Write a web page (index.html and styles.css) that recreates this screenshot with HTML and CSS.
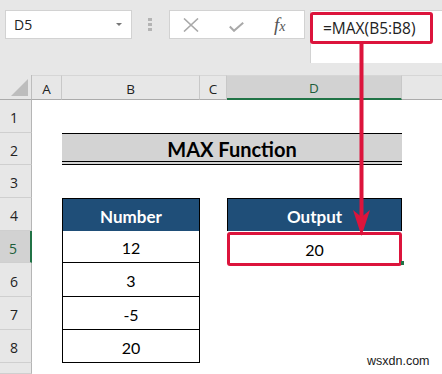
FILE: index.html
```html
<!DOCTYPE html>
<html lang="en">
<head>
  <meta charset="UTF-8">
  <meta name="viewport" content="width=device-width, initial-scale=1.0">
  <title>MAX Function</title>
  <link rel="stylesheet" href="styles.css">
</head>
<body>
  <div class="app">
    <div class="toolbar">
      <div class="namebox">
        <span>D5</span>
        <span class="caret"></span>
      </div>
      <div class="grip"><i></i><i></i><i></i></div>
      <div class="fbuttons">
        <svg class="ico-x" width="16" height="14" viewBox="0 0 16 14">
          <path d="M1 0.5 L15 13.5 M15 0.5 L1 13.5" stroke="#a9a9a9" stroke-width="1.6" fill="none"/>
        </svg>
        <svg class="ico-check" width="15" height="10" viewBox="0 0 15 10">
          <path d="M0.8 4.5 L5 8.8 L14.2 0.8" stroke="#a9a9a9" stroke-width="2" fill="none"/>
        </svg>
        <span class="fx">f<small>x</small></span>
      </div>
      <div class="formula">
        <div class="formula-text">=MAX(B5:B8)</div>
      </div>
    </div>

    <div class="sheet">
      <!-- column headers -->
      <div class="corner"><span class="corner-tri"></span></div>
      <div class="colhead">A</div>
      <div class="colhead">B</div>
      <div class="colhead">C</div>
      <div class="colhead active">D</div>
      <div class="colhead rest"></div>

      <!-- row 1 -->
      <div class="rowhead">1</div>
      <div></div><div></div><div></div><div></div><div></div>

      <!-- row 2 -->
      <div class="rowhead">2</div>
      <div></div>
      <div class="title">MAX Function</div>
      <div></div>

      <!-- row 3 -->
      <div class="rowhead">3</div>
      <div></div><div></div><div></div><div></div><div></div>

      <!-- row 4 -->
      <div class="rowhead">4</div>
      <div></div>
      <div class="th">Number</div>
      <div></div>
      <div class="th">Output</div>
      <div></div>

      <!-- row 5 -->
      <div class="rowhead active">5</div>
      <div></div>
      <div class="td">12</div>
      <div></div>
      <div class="out-cell"><div class="out-box">20</div><span class="fill-handle"></span></div>
      <div></div>

      <!-- row 6 -->
      <div class="rowhead">6</div>
      <div></div>
      <div class="td">3</div>
      <div></div><div></div><div></div>

      <!-- row 7 -->
      <div class="rowhead">7</div>
      <div></div>
      <div class="td">-5</div>
      <div></div><div></div><div></div>

      <!-- row 8 -->
      <div class="rowhead">8</div>
      <div></div>
      <div class="td">20</div>
      <div></div><div></div><div></div>

      <!-- row 9 (cut off) -->
      <div class="rowhead"></div>
      <div></div><div></div><div></div><div></div><div></div>
    </div>

    <!-- callout arrow from formula to output cell -->
    <svg class="arrow" width="442" height="374" viewBox="0 0 442 374">
      <line x1="361.5" y1="43" x2="361.5" y2="222" stroke="#dc143c" stroke-width="4"/>
      <polygon points="353,210 361.5,217 370,210 361.5,236" fill="#dc143c"/>
    </svg>

    <div class="watermark">wsxdn.com</div>
  </div>
</body>
</html>
```

FILE: styles.css
```css
body {
  margin: 0;
  background: #fff;
  font-family: 'Open Sans', 'Noto Sans', sans-serif;
  color: #222;
  overflow: hidden;
}

.app {
  position: relative;
  width: 442px;
  height: 374px;
  overflow: hidden;
}

/* formula bar */

.toolbar {
  height: 75px;
  box-sizing: border-box;
  background: #e7e7e7;
  display: flex;
  align-items: flex-start;
  padding: 10px 0 0 5px;
}

.namebox {
  width: 127px;
  height: 29px;
  box-sizing: border-box;
  background: #fff;
  border: 1px solid #d2d2d2;
  display: flex;
  align-items: center;
  justify-content: space-between;
  padding: 0 9px 0 8px;
  font-size: 14px;
  color: #222;
}

.caret {
  width: 0;
  height: 0;
  border-left: 3px solid transparent;
  border-right: 3px solid transparent;
  border-top: 3px solid #777;
}

.grip {
  width: 4px;
  margin: 8px 17px 0 16px;
  display: flex;
  flex-direction: column;
  gap: 2px;
}

.grip i {
  display: block;
  width: 4px;
  height: 3px;
  background: #b4b4b4;
}

.fbuttons {
  width: 136px;
  height: 29px;
  box-sizing: border-box;
  background: #fff;
  border: 1px solid #d2d2d2;
  display: flex;
  align-items: center;
  padding-left: 13px;
}

.ico-x {
  margin-top: 1px;
}

.ico-check {
  margin: 5px 0 0 30px;
}

.fx {
  margin-left: 30px;
  font-family: 'Liberation Serif', serif;
  font-style: italic;
  font-size: 19px;
  color: #555;
  line-height: 1;
}

.fx small {
  font-size: 14px;
}

.formula {
  margin-left: 5px;
  flex: 1;
  height: 53px;
  background: #fff;
  border-left: 1px solid #d2d2d2;
  border-top: 1px solid #d2d2d2;
  box-sizing: border-box;
}

.formula-text {
  width: 123px;
  height: 32px;
  box-sizing: border-box;
  margin: 1px 0 0 -1px;
  border: 3px solid #dc143c;
  border-radius: 3px;
  padding-left: 10px;
  font-size: 15.5px;
  line-height: 26px;
  color: #222;
}

/* worksheet */

.sheet {
  display: grid;
  grid-template-columns: 32px 30px 138px 27px 175px 1fr;
  grid-template-rows: 25px 33px 32px 33px 33px 32px 34px 33px 33px 1fr;
  height: 299px;
  font-family: 'Lato', 'Open Sans', sans-serif;
}

.corner {
  background: #e7e7e7;
  border-right: 1px solid #bdbdbd;
  border-bottom: 1px solid #ababab;
  display: flex;
  justify-content: flex-end;
  align-items: flex-end;
  padding: 0 3px 3px 0;
}

.corner-tri {
  width: 17px;
  height: 17px;
  background: #bdbdbd;
  clip-path: polygon(100% 0, 100% 100%, 0 100%);
}

.colhead {
  background: #e7e7e7;
  border-right: 1px solid #c8c8c8;
  border-bottom: 1px solid #ababab;
  border-top: 1px solid #d6d6d6;
  font-family: 'Open Sans', 'Noto Sans', sans-serif;
  font-size: 13.5px;
  color: #222;
  display: flex;
  align-items: center;
  justify-content: center;
  padding-top: 2px;
}

.colhead.active {
  background: #d2d2d2;
  border-bottom: 2px solid #217346;
  color: #1d5e3a;
}

.colhead.rest {
  border-right: none;
}

.rowhead {
  background: #e7e7e7;
  border-right: 1px solid #b5b5b5;
  border-bottom: 1px solid #cfcfcf;
  font-family: 'Open Sans', 'Noto Sans', sans-serif;
  font-size: 14px;
  color: #222;
  display: flex;
  align-items: center;
  justify-content: center;
  padding-top: 3px;
  padding-right: 3px;
}

.rowhead.active {
  background: #d2d2d2;
  border-right: 2px solid #217346;
  color: #1d5e3a;
  padding-right: 4px;
}

.title {
  grid-column: span 3;
  background: #d3d3d3;
  border-top: 1px solid #000;
  border-bottom: 4px double #000;
  font-weight: 700;
  font-size: 20px;
  color: #000;
  display: flex;
  align-items: center;
  justify-content: center;
  padding-top: 2px;
}

.th {
  background: #1f4e78;
  border: 1px solid #000;
  border-bottom: none;
  color: #fff;
  font-weight: 700;
  font-size: 17px;
  display: flex;
  align-items: center;
  justify-content: center;
  padding-top: 2px;
}

.td {
  border: 1px solid #000;
  border-top: none;
  font-size: 16px;
  color: #000;
  display: flex;
  align-items: center;
  justify-content: center;
  padding-top: 2px;
}

.out-cell {
  position: relative;
}

.out-box {
  height: 34px;
  margin-top: 1px;
  box-sizing: border-box;
  border: 3px solid #dc143c;
  border-radius: 3px;
  font-size: 16px;
  color: #000;
  display: flex;
  align-items: center;
  justify-content: center;
  padding-top: 1px;
  background: #fff;
}

.fill-handle {
  position: absolute;
  right: -2px;
  top: 30px;
  width: 3px;
  height: 4px;
  background: #217346;
}

.arrow {
  position: absolute;
  left: 0;
  top: 0;
  pointer-events: none;
}

.watermark {
  position: absolute;
  left: 367px;
  top: 354px;
  font-family: 'Liberation Sans', Arial, sans-serif;
  font-size: 12.5px;
  color: #1a1a1a;
}
```
